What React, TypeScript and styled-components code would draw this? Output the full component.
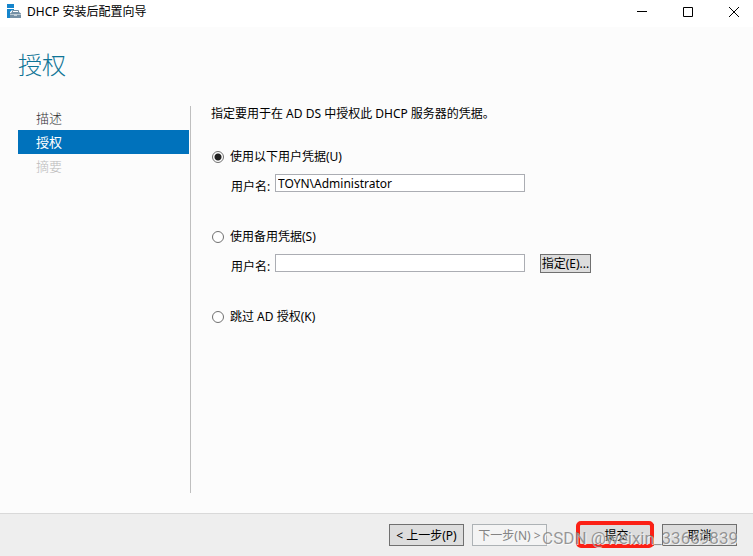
import React, { useState } from "react";
import styled, { createGlobalStyle } from "styled-components";

const GlobalStyle = createGlobalStyle`
  *, *::before, *::after { box-sizing: border-box; }
  body { margin: 0; background: #fcfcfc; }
  body, button, input {
    font-family: "Noto Sans", "Noto Sans CJK SC", sans-serif;
    font-size: 12px;
    line-height: 16px;
    color: #000;
  }
`;

const Window = styled.div`
  position: relative;
  display: flex;
  flex-direction: column;
  min-height: 100vh;
  background: #fcfcfc;
`;

const TitleBar = styled.header`
  display: flex;
  align-items: center;
  gap: 8px;
  height: 27px;
  padding-bottom: 4px;
  padding-left: 6px;
  background: #fff;
`;

const WindowTitle = styled.span`
  display: flex;
  align-items: center;
  gap: 5px;
  flex: 1;
`;

const AppIcon = styled.svg`
  width: 16px;
  height: 16px;
`;

const WindowButton = styled.button`
  display: flex;
  align-items: center;
  justify-content: center;
  width: 38px;
  height: 23px;
  padding: 0;
  border: 0;
  background: transparent;
`;

const Heading = styled.h1`
  margin: 0;
  padding: 22px 18px 0;
  font-size: 24px;
  line-height: 32px;
  font-weight: 300;
  color: #0f7496;
`;

const Body = styled.div`
  display: flex;
  flex: 1;
  padding: 25px 18px 20px;
`;

const Sidebar = styled.nav`
  width: 173px;
  flex: none;
  padding-right: 1px;
  border-right: 1px solid #bfbfbf;
`;

const Step = styled.button<{ $active?: boolean }>`
  display: block;
  width: 100%;
  height: 24px;
  padding: 0 18px;
  border: 0;
  background: ${(p) => (p.$active ? "#0072bc" : "transparent")};
  color: ${(p) => (p.$active ? "#fff" : "#333")};
  font-size: 13px;
  font-weight: ${(p) => (p.$active ? 400 : 300)};
  text-align: left;

  &:disabled { color: #bbb; }
`;

const Content = styled.main`
  flex: 1;
  min-width: 0;
  padding-left: 20px;
`;

const Intro = styled.p`
  margin: 0 0 27px;
`;

const Option = styled.div`
  margin-bottom: 34px;
`;

const RadioLabel = styled.label`
  display: flex;
  align-items: center;
  gap: 6px;
  height: 16px;
`;

const Radio = styled.input`
  appearance: none;
  width: 12px;
  height: 12px;
  margin: 0 0 0 1px;
  border: 1px solid #707070;
  border-radius: 50%;
  background: #fff;

  &:checked { background: radial-gradient(circle, #222 0 3px, #fff 4px); }
`;

const FieldRow = styled.div`
  display: flex;
  align-items: flex-start;
  padding: 9px 0 0 20px;
`;

const FieldLabel = styled.label`
  width: 44px;
  padding-top: 5px;
`;

const TextBox = styled.input`
  flex: 0 1 250px;
  min-width: 0;
  height: 18px;
  padding: 0 2px;
  border: 1px solid #abadb3;
  border-radius: 0;
  background: #fff;
`;

const Button = styled.button`
  height: 22px;
  width: 75px;
  padding: 2px 0 0;
  border: 1px solid #707070;
  background: #ddd;
  white-space: nowrap;

  &:disabled {
    border-color: #adb2b5;
    background: #f4f4f4;
    color: #838383;
  }
`;

const SmallButton = styled(Button)`
  width: 51px;
  height: 19px;
  margin-left: 15px;
  padding: 0;
`;

const Footer = styled.footer`
  display: flex;
  justify-content: flex-end;
  align-items: flex-start;
  gap: 8px;
  height: 43px;
  padding: 10px 16px 0;
  border-top: 1px solid #d9d9d9;
  background: #eee;
`;

const Highlighted = styled.div`
  position: relative;
  display: flex;
  margin-left: 24px;

  &::after {
    content: "";
    position: absolute;
    inset: -3px 0 -2px -3px;
    border: 4px solid #fb2015;
    border-radius: 5px;
    pointer-events: none;
  }
`;

const Watermark = styled.span`
  position: absolute;
  right: 15px;
  bottom: 8px;
  font-family: Roboto, sans-serif;
  font-size: 17px;
  line-height: 20px;
  color: rgba(120, 120, 120, 0.75);
  text-shadow: 1px 1px 0 rgba(255, 255, 255, 0.7);
  pointer-events: none;
`;

export default function App() {
  const [mode, setMode] = useState("current");
  const [user, setUser] = useState("TOYN\\Administrator");

  return (
    <>
      <GlobalStyle />
      <Window>
        <TitleBar>
          <WindowTitle>
            <AppIcon viewBox="0 0 16 16" aria-hidden="true">
              <path d="M1 0h7v4H1zM1 5h7v1H6L4 8v6H1z" fill="#1585cc" />
              <path d="M4 9.500 6 8h7l2 1.500V14H4z" fill="#7590a5" />
              <path d="M6.500 8.500v-2h6v2" fill="none" stroke="#7590a5" />
              <path d="M4 10.500h4M11 10.500h4" stroke="#b9c8d2" />
              <path d="M8 10h3v2H8z" fill="#c5d0d8" />
            </AppIcon>
            DHCP 安装后配置向导
          </WindowTitle>
          <WindowButton aria-label="最小化">
            <svg width="10" height="10" aria-hidden="true"><path d="M0 4.500h10" stroke="#000" /></svg>
          </WindowButton>
          <WindowButton aria-label="最大化">
            <svg width="10" height="10" aria-hidden="true"><path d="M.5.5h9v9h-9z" fill="none" stroke="#000" /></svg>
          </WindowButton>
          <WindowButton aria-label="关闭">
            <svg width="10" height="10" aria-hidden="true"><path d="m0 0 10 10M10 0 0 10" stroke="#000" /></svg>
          </WindowButton>
        </TitleBar>
        <Heading>授权</Heading>
        <Body>
          <Sidebar>
            <Step>描述</Step>
            <Step $active aria-current="step">授权</Step>
            <Step disabled>摘要</Step>
          </Sidebar>
          <Content>
            <Intro>指定要用于在 AD DS 中授权此 DHCP 服务器的凭据。</Intro>
            <Option>
              <RadioLabel>
                <Radio type="radio" name="mode" checked={mode === "current"} onChange={() => setMode("current")} />
                使用以下用户凭据(U)
              </RadioLabel>
              <FieldRow>
                <FieldLabel htmlFor="current-user">用户名:</FieldLabel>
                <TextBox id="current-user" value={user} onChange={(e) => setUser(e.target.value)} />
              </FieldRow>
            </Option>
            <Option>
              <RadioLabel>
                <Radio type="radio" name="mode" checked={mode === "other"} onChange={() => setMode("other")} />
                使用备用凭据(S)
              </RadioLabel>
              <FieldRow>
                <FieldLabel htmlFor="other-user">用户名:</FieldLabel>
                <TextBox id="other-user" />
                <SmallButton>指定(E)...</SmallButton>
              </FieldRow>
            </Option>
            <RadioLabel>
              <Radio type="radio" name="mode" checked={mode === "skip"} onChange={() => setMode("skip")} />
              跳过 AD 授权(K)
            </RadioLabel>
          </Content>
        </Body>
        <Footer>
          <Button>&lt; 上一步(P)</Button>
          <Button disabled>下一步(N) &gt;</Button>
          <Highlighted>
            <Button>提交</Button>
          </Highlighted>
          <Button>取消</Button>
        </Footer>
        <Watermark>CSDN @weixin_33669839</Watermark>
      </Window>
    </>
  );
}
